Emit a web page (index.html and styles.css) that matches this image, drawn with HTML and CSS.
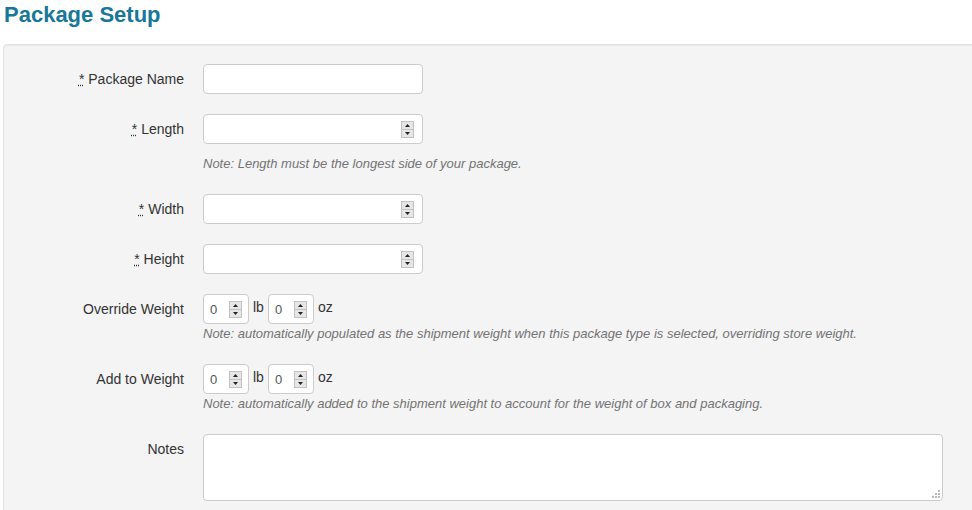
FILE: index.html
```html
<!DOCTYPE html>
<html lang="en">
<head>
<meta charset="UTF-8">
<meta name="viewport" content="width=device-width, initial-scale=1.0">
<title>Package Setup</title>
<link rel="stylesheet" href="styles.css">
</head>
<body>
<h1 class="page-title">Package Setup</h1>
<form class="well">
    <div class="row">
        <label class="lbl"><abbr title="required">*</abbr> Package Name</label>
        <div class="field"><input class="text-input" type="text"></div>
    </div>
    <div class="row">
        <label class="lbl"><abbr title="required">*</abbr> Length</label>
        <div class="field">
            <div class="num num-wide"><input type="text"><svg class="spin" width="13" height="17" viewBox="0 0 13 17"><rect x="0.5" y="0.5" width="12" height="16" fill="#e6e6e6" stroke="#c2c2c2"/><line x1="1" y1="8.5" x2="12" y2="8.5" stroke="#c2c2c2"/><path d="M4 6h5l-2.5-3z" fill="#222"/><path d="M4 11h5l-2.5 3z" fill="#222"/></svg></div>
            <p class="note note-gap">Note: Length must be the longest side of your package.</p>
        </div>
    </div>
    <div class="row">
        <label class="lbl"><abbr title="required">*</abbr> Width</label>
        <div class="field">
            <div class="num num-wide"><input type="text"><svg class="spin" width="13" height="17" viewBox="0 0 13 17"><rect x="0.5" y="0.5" width="12" height="16" fill="#e6e6e6" stroke="#c2c2c2"/><line x1="1" y1="8.5" x2="12" y2="8.5" stroke="#c2c2c2"/><path d="M4 6h5l-2.5-3z" fill="#222"/><path d="M4 11h5l-2.5 3z" fill="#222"/></svg></div>
        </div>
    </div>
    <div class="row">
        <label class="lbl"><abbr title="required">*</abbr> Height</label>
        <div class="field">
            <div class="num num-wide"><input type="text"><svg class="spin" width="13" height="17" viewBox="0 0 13 17"><rect x="0.5" y="0.5" width="12" height="16" fill="#e6e6e6" stroke="#c2c2c2"/><line x1="1" y1="8.5" x2="12" y2="8.5" stroke="#c2c2c2"/><path d="M4 6h5l-2.5-3z" fill="#222"/><path d="M4 11h5l-2.5 3z" fill="#222"/></svg></div>
        </div>
    </div>
    <div class="row">
        <label class="lbl">Override Weight</label>
        <div class="field">
            <div class="weight">
                <div class="num num-small"><input type="text" value="0"><svg class="spin" width="13" height="17" viewBox="0 0 13 17"><rect x="0.5" y="0.5" width="12" height="16" fill="#e6e6e6" stroke="#c2c2c2"/><line x1="1" y1="8.5" x2="12" y2="8.5" stroke="#c2c2c2"/><path d="M4 6h5l-2.5-3z" fill="#222"/><path d="M4 11h5l-2.5 3z" fill="#222"/></svg></div>
                <span class="unit">lb</span>
                <div class="num num-small"><input type="text" value="0"><svg class="spin" width="13" height="17" viewBox="0 0 13 17"><rect x="0.5" y="0.5" width="12" height="16" fill="#e6e6e6" stroke="#c2c2c2"/><line x1="1" y1="8.5" x2="12" y2="8.5" stroke="#c2c2c2"/><path d="M4 6h5l-2.5-3z" fill="#222"/><path d="M4 11h5l-2.5 3z" fill="#222"/></svg></div>
                <span class="unit">oz</span>
            </div>
            <p class="note">Note: automatically populated as the shipment weight when this package type is selected, overriding store weight.</p>
        </div>
    </div>
    <div class="row">
        <label class="lbl">Add to Weight</label>
        <div class="field">
            <div class="weight">
                <div class="num num-small"><input type="text" value="0"><svg class="spin" width="13" height="17" viewBox="0 0 13 17"><rect x="0.5" y="0.5" width="12" height="16" fill="#e6e6e6" stroke="#c2c2c2"/><line x1="1" y1="8.5" x2="12" y2="8.5" stroke="#c2c2c2"/><path d="M4 6h5l-2.5-3z" fill="#222"/><path d="M4 11h5l-2.5 3z" fill="#222"/></svg></div>
                <span class="unit">lb</span>
                <div class="num num-small"><input type="text" value="0"><svg class="spin" width="13" height="17" viewBox="0 0 13 17"><rect x="0.5" y="0.5" width="12" height="16" fill="#e6e6e6" stroke="#c2c2c2"/><line x1="1" y1="8.5" x2="12" y2="8.5" stroke="#c2c2c2"/><path d="M4 6h5l-2.5-3z" fill="#222"/><path d="M4 11h5l-2.5 3z" fill="#222"/></svg></div>
                <span class="unit">oz</span>
            </div>
            <p class="note">Note: automatically added to the shipment weight to account for the weight of box and packaging.</p>
        </div>
    </div>
    <div class="row">
        <label class="lbl">Notes</label>
        <div class="field">
            <div class="notes-wrap">
                <textarea class="notes"></textarea>
                <svg class="grip" width="8" height="8" viewBox="0 0 8 8"><rect x="6" y="0" width="2" height="2" fill="#bbb"/><rect x="3" y="3" width="2" height="2" fill="#bbb"/><rect x="6" y="3" width="2" height="2" fill="#bbb"/><rect x="0" y="6" width="2" height="2" fill="#bbb"/><rect x="3" y="6" width="2" height="2" fill="#bbb"/><rect x="6" y="6" width="2" height="2" fill="#bbb"/></svg>
            </div>
        </div>
    </div>
</form>
</body>
</html>
```

FILE: styles.css
```css
html, body {
    overflow: hidden;
}
body {
    margin: 0;
    background-color: white;
    font-family: "Liberation Sans", Arial, sans-serif;
    font-size: 14px;
    color: #333;
}
.page-title {
    margin: 0 0 14px 4px;
    font-size: 22px;
    line-height: 30px;
    font-weight: bold;
    color: #18789a;
}
.well {
    margin: 0 -12px 0 3px;
    padding: 19px 19px 40px 0;
    background-color: #f4f4f4;
    border: 1px solid #e3e3e3;
    border-radius: 4px;
    box-shadow: inset 0 1px 1px rgba(0, 0, 0, 0.05);
}
.row {
    display: grid;
    grid-template-columns: 180px 1fr;
    column-gap: 19px;
    margin-bottom: 20px;
}
.lbl {
    text-align: right;
    line-height: 30px;
    color: #333;
}
abbr {
    text-decoration: underline dotted;
    cursor: help;
}
.text-input,
.num,
.notes {
    box-sizing: border-box;
    background-color: white;
    border: 1px solid #ccc;
    border-radius: 4px;
    font-family: inherit;
}
.text-input {
    width: 220px;
    height: 30px;
    padding: 0 6px;
    font-size: 13px;
}
.num {
    display: flex;
    align-items: center;
    height: 30px;
}
.num input {
    flex: 1;
    min-width: 0;
    border: none;
    outline: none;
    padding: 0;
    background: transparent;
    font-family: inherit;
    font-size: 13px;
    color: #555;
}
.num-wide {
    width: 220px;
    padding: 0 8px 0 6px;
}
.num-small {
    width: 46px;
    padding: 0 6px 0 6px;
}
.spin {
    display: block;
    flex: none;
}
.weight {
    display: flex;
    align-items: center;
    gap: 4px;
}
.unit {
    font-size: 14px;
    color: #333;
    margin-top: -4px;
}
.note {
    margin: 0;
    font-size: 13px;
    line-height: 20px;
    font-style: italic;
    color: #737373;
}
.note-gap {
    margin-top: 10px;
}
.notes-wrap {
    position: relative;
    width: 740px;
}
.notes {
    display: block;
    width: 740px;
    height: 67px;
    padding: 6px;
    resize: none;
}
.grip {
    position: absolute;
    right: 3px;
    bottom: 3px;
}
```
